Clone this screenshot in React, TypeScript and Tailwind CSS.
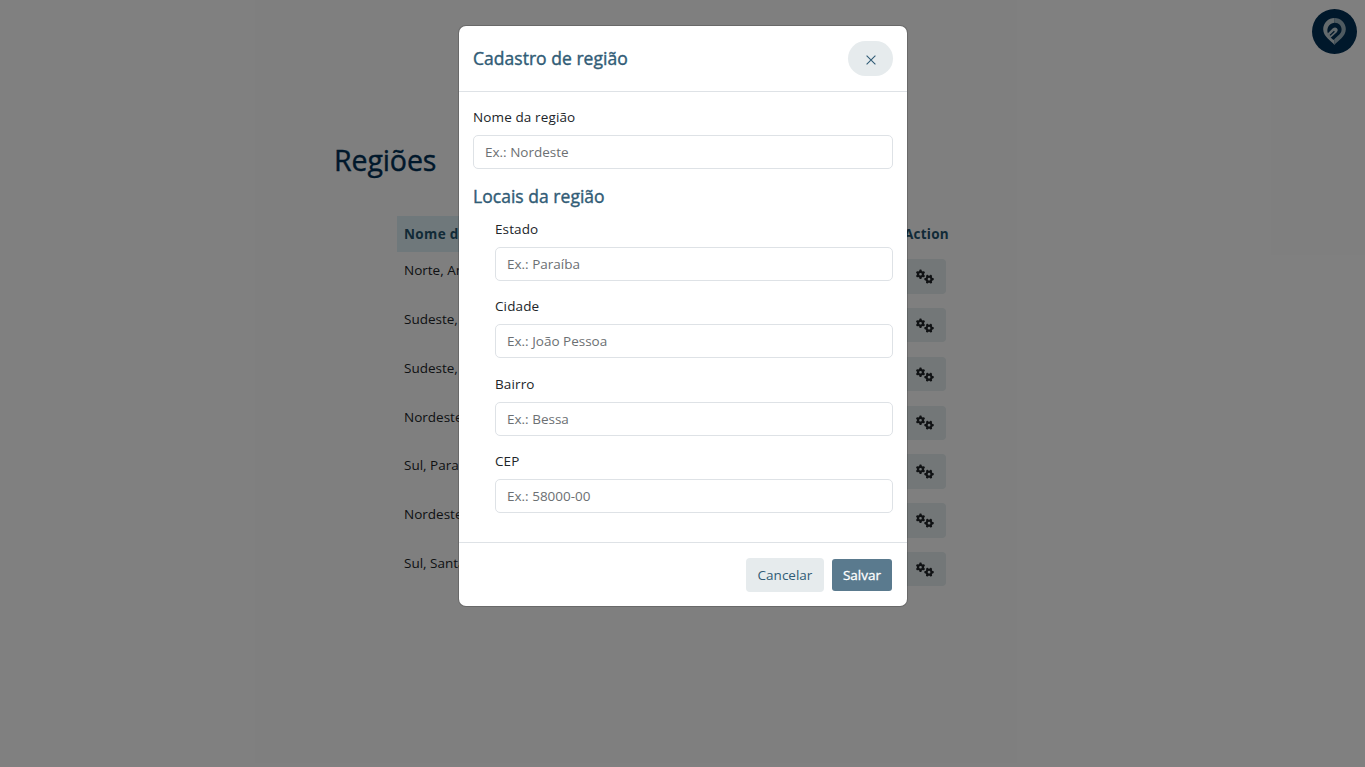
import { FaGears } from "react-icons/fa6";

const rows = [
  "Norte, Amazonas",
  "Sudeste, São Paulo",
  "Sudeste, Rio de Janeiro",
  "Nordeste, Paraíba",
  "Sul, Paraná",
  "Nordeste, Bahia",
  "Sul, Santa Catarina",
];

const places = [
  { label: "Estado", hint: "Ex.: Paraíba" },
  { label: "Cidade", hint: "Ex.: João Pessoa" },
  { label: "Bairro", hint: "Ex.: Bessa" },
  { label: "CEP", hint: "Ex.: 58000-00" },
];

function Field({ label, hint }: { label: string; hint: string }) {
  return (
    <label className="block">
      <span className="block h-[22px] leading-[22px] tracking-[0.12px] text-[#212529]">{label}</span>
      <input
        placeholder={hint}
        className="mt-[7px] block h-[34px] w-full rounded-[5px] border border-[#dee2e6] bg-white px-[11px] placeholder:text-[#6c7073] outline-none"
      />
    </label>
  );
}

function Logo() {
  return (
    <svg viewBox="0 0 45 45" className="size-[45px]">
      <circle cx="22.5" cy="22.5" r="22.5" fill="#003056" />
      <path d="M22.5 36 C19 31.8 11.2 27.5 11.2 20.3 A11.3 11.3 0 0 1 22.5 9 Z" fill="#c9d6db" />
      <path d="M22.4 9 A11.3 11.3 0 0 1 33.8 20.3 C33.8 27.5 26 31.8 22.4 36 Z" fill="#9db5c0" />
      <path d="M15.4 22.6 C15 17.6 18.4 13.8 22.8 13.8 C27 13.8 29.6 17 29.6 20.4 C29.6 23.2 28 25 26 26.8 L21.4 31 L16.4 26.6 Z" fill="#003056" />
      <path d="M14.6 25.4 L20.6 19.6 Q23 17.4 24.9 19.2 Q26.7 21.2 24.5 23.4 L18.4 29 Z" fill="#c3d2d8" />
      <path d="M18 26.4 L22.4 22.2" stroke="#003056" strokeWidth="1.3" />
    </svg>
  );
}

export default function App() {
  return (
    <div className="relative h-[767px] w-full overflow-hidden bg-white font-['Open_Sans','Noto_Sans',sans-serif] text-[13.5px] text-[#212529]">
      <header className="flex h-[62px] justify-end pt-[9px] pr-2">
        <Logo />
      </header>
      <main className="ml-[334px] w-[697px] pt-[80px]">
        <h1 className="h-9 text-[28.5px] leading-9 tracking-[-0.1px] text-[#003056] [-webkit-text-stroke:0.4px_#003056]">Regiões</h1>
        <table className="mt-[38px] ml-[63px] w-[556px] table-fixed border-collapse text-left">
          <thead>
            <tr className="h-9 text-[#24556f]">
              <th className="w-[501px] bg-[#def1f6] px-[7px] font-bold tracking-[0.35px]">Nome da região</th>
              <th className="pl-[6px] font-bold tracking-[0.25px]">Action</th>
            </tr>
          </thead>
          <tbody>
            {rows.map((row) => (
              <tr key={row} className="h-[48.8px] align-top">
                <td className="px-[7px] pt-[7.2px] leading-[22px]">{row}</td>
                <td className="pt-[7.2px] pl-[6px]">
                  <button className="flex h-[34.5px] w-[42px] items-center justify-center rounded-[4px] bg-[#e6eef0]" aria-label="Ações">
                    <FaGears className="h-[15px] w-[18px]" />
                  </button>
                </td>
              </tr>
            ))}
          </tbody>
        </table>
      </main>

      <div className="absolute inset-0 flex items-start justify-center bg-black/50 pt-[26px]">
        <section role="dialog" className="ml-px flex h-[580px] w-[448px] flex-col rounded-[7px] bg-white shadow-[0_0_0_1px_rgba(0,0,0,0.17)]">
          <header className="flex h-[66px] shrink-0 items-center justify-between border-b border-[#dee2e6] px-[14px]">
            <h2 className="text-[17.5px] tracking-[0.03px] text-[#315c76] [-webkit-text-stroke:0.4px_#315c76]">Cadastro de região</h2>
            <button className="flex h-[35px] w-[45px] items-center justify-center rounded-[18px] bg-[#e6ebed]" aria-label="Fechar">
              <svg viewBox="0 0 10 10" className="mt-[2px] size-[10px]" fill="none" stroke="#315c76" strokeWidth="1.1">
                <path d="M.6.6 9.4 9.4M9.4.6.6 9.4" />
              </svg>
            </button>
          </header>
          <div className="flex-1 px-[14px] pt-[14px]">
            <Field label="Nome da região" hint="Ex.: Nordeste" />
            <h3 className="mt-[14px] h-[26px] text-[17.5px] leading-[26px] tracking-[0.03px] text-[#315c76] [-webkit-text-stroke:0.4px_#315c76]">Locais da região</h3>
            <div className="mt-[8.5px] flex flex-col gap-[14.6px] pl-[22px]">
              {places.map((place) => (
                <Field key={place.label} {...place} />
              ))}
            </div>
          </div>
          <footer className="flex h-[64px] shrink-0 items-center justify-end gap-2 border-t border-[#dee2e6] pt-px pr-[15px]">
            <button className="h-[34px] w-[78px] rounded-[4px] bg-[#e6ebed] pt-px text-[#315c76]">Cancelar</button>
            <button className="h-8 w-[60px] rounded-[3px] bg-[#5a7a8e] pt-px text-white [-webkit-text-stroke:0.3px_white]">Salvar</button>
          </footer>
        </section>
      </div>
    </div>
  );
}
